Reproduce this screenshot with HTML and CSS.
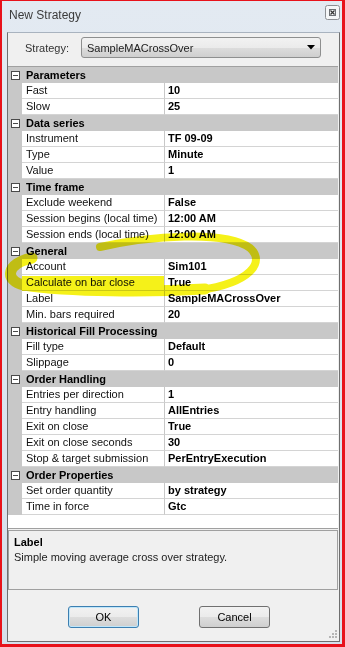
FILE: index.html
```html
<!DOCTYPE html>
<html lang="en">
<head>
    <meta charset="UTF-8">
    <title>New Strategy</title>
    <link rel="stylesheet" href="styles.css">
</head>
<body>
<div class="window">
    <div class="titlebar">
        <span class="title">New Strategy</span>
        <span class="close">
            <svg width="15" height="15" viewBox="0 0 15 15"><rect x="0.5" y="0.5" width="14" height="14" rx="2" fill="#f4f6f8" stroke="#8c8f94"/><rect x="4.5" y="4.5" width="6" height="6" fill="none" stroke="#6b6e73"/><path d="M5.5 5.5l4 4M9.5 5.5l-4 4" stroke="#333" stroke-width="1.2"/></svg>
        </span>
    </div>
    <div class="client">
        <div class="strategy-row">
            <span class="strategy-label">Strategy:</span>
            <div class="combo">
                <span>SampleMACrossOver</span>
                <svg width="8" height="5" viewBox="0 0 8 5"><path d="M0 0h8L4 4.5z" fill="#000"/></svg>
            </div>
        </div>

        <div class="grid">
            <div class="cat"><span class="toggle"></span>Parameters</div>
            <div class="row"><span class="gutter"></span><span class="name">Fast</span><span class="value">10</span></div>
            <div class="row"><span class="gutter"></span><span class="name">Slow</span><span class="value">25</span></div>
            <div class="cat"><span class="toggle"></span>Data series</div>
            <div class="row"><span class="gutter"></span><span class="name">Instrument</span><span class="value">TF 09-09</span></div>
            <div class="row"><span class="gutter"></span><span class="name">Type</span><span class="value">Minute</span></div>
            <div class="row"><span class="gutter"></span><span class="name">Value</span><span class="value">1</span></div>
            <div class="cat"><span class="toggle"></span>Time frame</div>
            <div class="row"><span class="gutter"></span><span class="name">Exclude weekend</span><span class="value">False</span></div>
            <div class="row"><span class="gutter"></span><span class="name">Session begins (local time)</span><span class="value">12:00 AM</span></div>
            <div class="row"><span class="gutter"></span><span class="name">Session ends (local time)</span><span class="value">12:00 AM</span></div>
            <div class="cat"><span class="toggle"></span>General</div>
            <div class="row"><span class="gutter"></span><span class="name">Account</span><span class="value">Sim101</span></div>
            <div class="row"><span class="gutter"></span><span class="name">Calculate on bar close</span><span class="value">True</span></div>
            <div class="row"><span class="gutter"></span><span class="name">Label</span><span class="value">SampleMACrossOver</span></div>
            <div class="row"><span class="gutter"></span><span class="name">Min. bars required</span><span class="value">20</span></div>
            <div class="cat"><span class="toggle"></span>Historical Fill Processing</div>
            <div class="row"><span class="gutter"></span><span class="name">Fill type</span><span class="value">Default</span></div>
            <div class="row"><span class="gutter"></span><span class="name">Slippage</span><span class="value">0</span></div>
            <div class="cat"><span class="toggle"></span>Order Handling</div>
            <div class="row"><span class="gutter"></span><span class="name">Entries per direction</span><span class="value">1</span></div>
            <div class="row"><span class="gutter"></span><span class="name">Entry handling</span><span class="value">AllEntries</span></div>
            <div class="row"><span class="gutter"></span><span class="name">Exit on close</span><span class="value">True</span></div>
            <div class="row"><span class="gutter"></span><span class="name">Exit on close seconds</span><span class="value">30</span></div>
            <div class="row"><span class="gutter"></span><span class="name">Stop &amp; target submission</span><span class="value">PerEntryExecution</span></div>
            <div class="cat"><span class="toggle"></span>Order Properties</div>
            <div class="row"><span class="gutter"></span><span class="name">Set order quantity</span><span class="value">by strategy</span></div>
            <div class="row"><span class="gutter"></span><span class="name">Time in force</span><span class="value">Gtc</span></div>
        </div>

        <div class="help">
            <div class="help-title">Label</div>
            <div>Simple moving average cross over strategy.</div>
        </div>

        <div class="buttons">
            <button class="btn default">OK</button>
            <button class="btn">Cancel</button>
        </div>
        <svg class="grip" width="9" height="9" viewBox="0 0 9 9" fill="#b5b5b5"><rect x="7" y="1" width="2" height="2"/><rect x="4" y="4" width="2" height="2"/><rect x="7" y="4" width="2" height="2"/><rect x="1" y="7" width="2" height="2"/><rect x="4" y="7" width="2" height="2"/><rect x="7" y="7" width="2" height="2"/></svg>
    </div>
</div>

<!-- hand-drawn highlight on top of the screenshot -->
<svg class="marker" width="345" height="647" viewBox="0 0 345 647">
    <rect x="22" y="276" width="142" height="15" fill="#f4f000"/>
    <path d="M100 247 C150 236 225 230 250 248 C266 262 250 283 200 290" fill="none" stroke="#f4f000" stroke-width="8" stroke-linecap="round"/>
    <path d="M205 289 C150 292 70 292 24 285 C4 281 6 263 32 258" fill="none" stroke="#f4f000" stroke-width="11" stroke-linecap="round"/>
</svg>
</body>
</html>
```

FILE: styles.css
```css
body { margin: 0; width: 345px; height: 647px; position: relative; font-family: "Liberation Sans", Arial, sans-serif; font-size: 11px; color: #000; overflow: hidden; }
.window { box-sizing: border-box; height: 647px; border: 2px solid #e8121b; border-top-width: 1px; border-right-width: 3px; border-bottom-width: 3px; padding: 0 2px 2px 5px; background: linear-gradient(#e3eaf2, #d6e0eb); display: flex; flex-direction: column; }
.titlebar { height: 31px; display: flex; align-items: center; justify-content: space-between; padding: 0 0 0 2px; }
.title { font-size: 12px; color: #3b3b3b; margin-top: -4px; }
.close { display: flex; margin: -8px 0 0 0; }
.client { flex: 1; position: relative; background: #f0f0f0; border: 1px solid #6f6f6f; border-top-color: #a9b3bf; display: flex; flex-direction: column; }
.strategy-row { display: flex; align-items: center; height: 21px; margin-top: 4px; padding-left: 17px; }
.strategy-label { width: 56px; color: #333; }
.combo { box-sizing: border-box; width: 240px; height: 21px; display: flex; align-items: center; justify-content: space-between; padding: 0 5px 0 5px; border: 1px solid #8e8f8f; border-radius: 3px; background: linear-gradient(#f2f2f2 0%, #ebebeb 50%, #dddddd 51%, #cfcfcf 100%); color: #222; }
.grid { margin-top: 8px; height: 461px; background: #fff; border-top: 1px solid #a0a0a0; border-bottom: 1px solid #a0a0a0; margin-right: 1px; }
.cat { height: 16px; display: flex; align-items: center; background: #c8c8c8; font-weight: bold; }
.toggle { box-sizing: border-box; width: 9px; height: 9px; margin: 0 6px 0 3px; border: 1px solid #4a4a4a; background: #fff linear-gradient(#4a4a4a, #4a4a4a) no-repeat center / 5px 1px; }
.row { height: 16px; display: flex; }
.gutter { width: 14px; background: #c8c8c8; }
.name, .value { box-sizing: border-box; height: 16px; line-height: 15px; border-bottom: 1px solid #d4d4d4; white-space: nowrap; overflow: hidden; }
.name { width: 143px; padding-left: 4px; border-right: 1px solid #c8c8c8; color: #111; }
.value { flex: 1; padding-left: 3px; font-weight: bold; }
.help { box-sizing: border-box; height: 60px; margin: 1px 1px 0 0; padding: 4px 5px; border: 1px solid #a0a0a0; line-height: 15px; color: #222; }
.help-title { font-weight: bold; color: #000; }
.buttons { display: flex; gap: 60px; padding: 16px 0 0 60px; }
.btn { box-sizing: border-box; width: 71px; height: 22px; border: 1px solid #707070; border-radius: 3px; background: linear-gradient(#f2f2f2 0%, #ebebeb 50%, #dddddd 51%, #cfcfcf 100%); font-family: "Liberation Sans", Arial, sans-serif; font-size: 11px; color: #000; padding: 0; }
.btn.default { border-color: #3c7fb1; box-shadow: inset 0 0 0 1px #bfe6fa; }
.grip { position: absolute; right: 2px; bottom: 3px; }
.marker { position: absolute; left: 0; top: 0; mix-blend-mode: multiply; opacity: 0.9; pointer-events: none; }
```
